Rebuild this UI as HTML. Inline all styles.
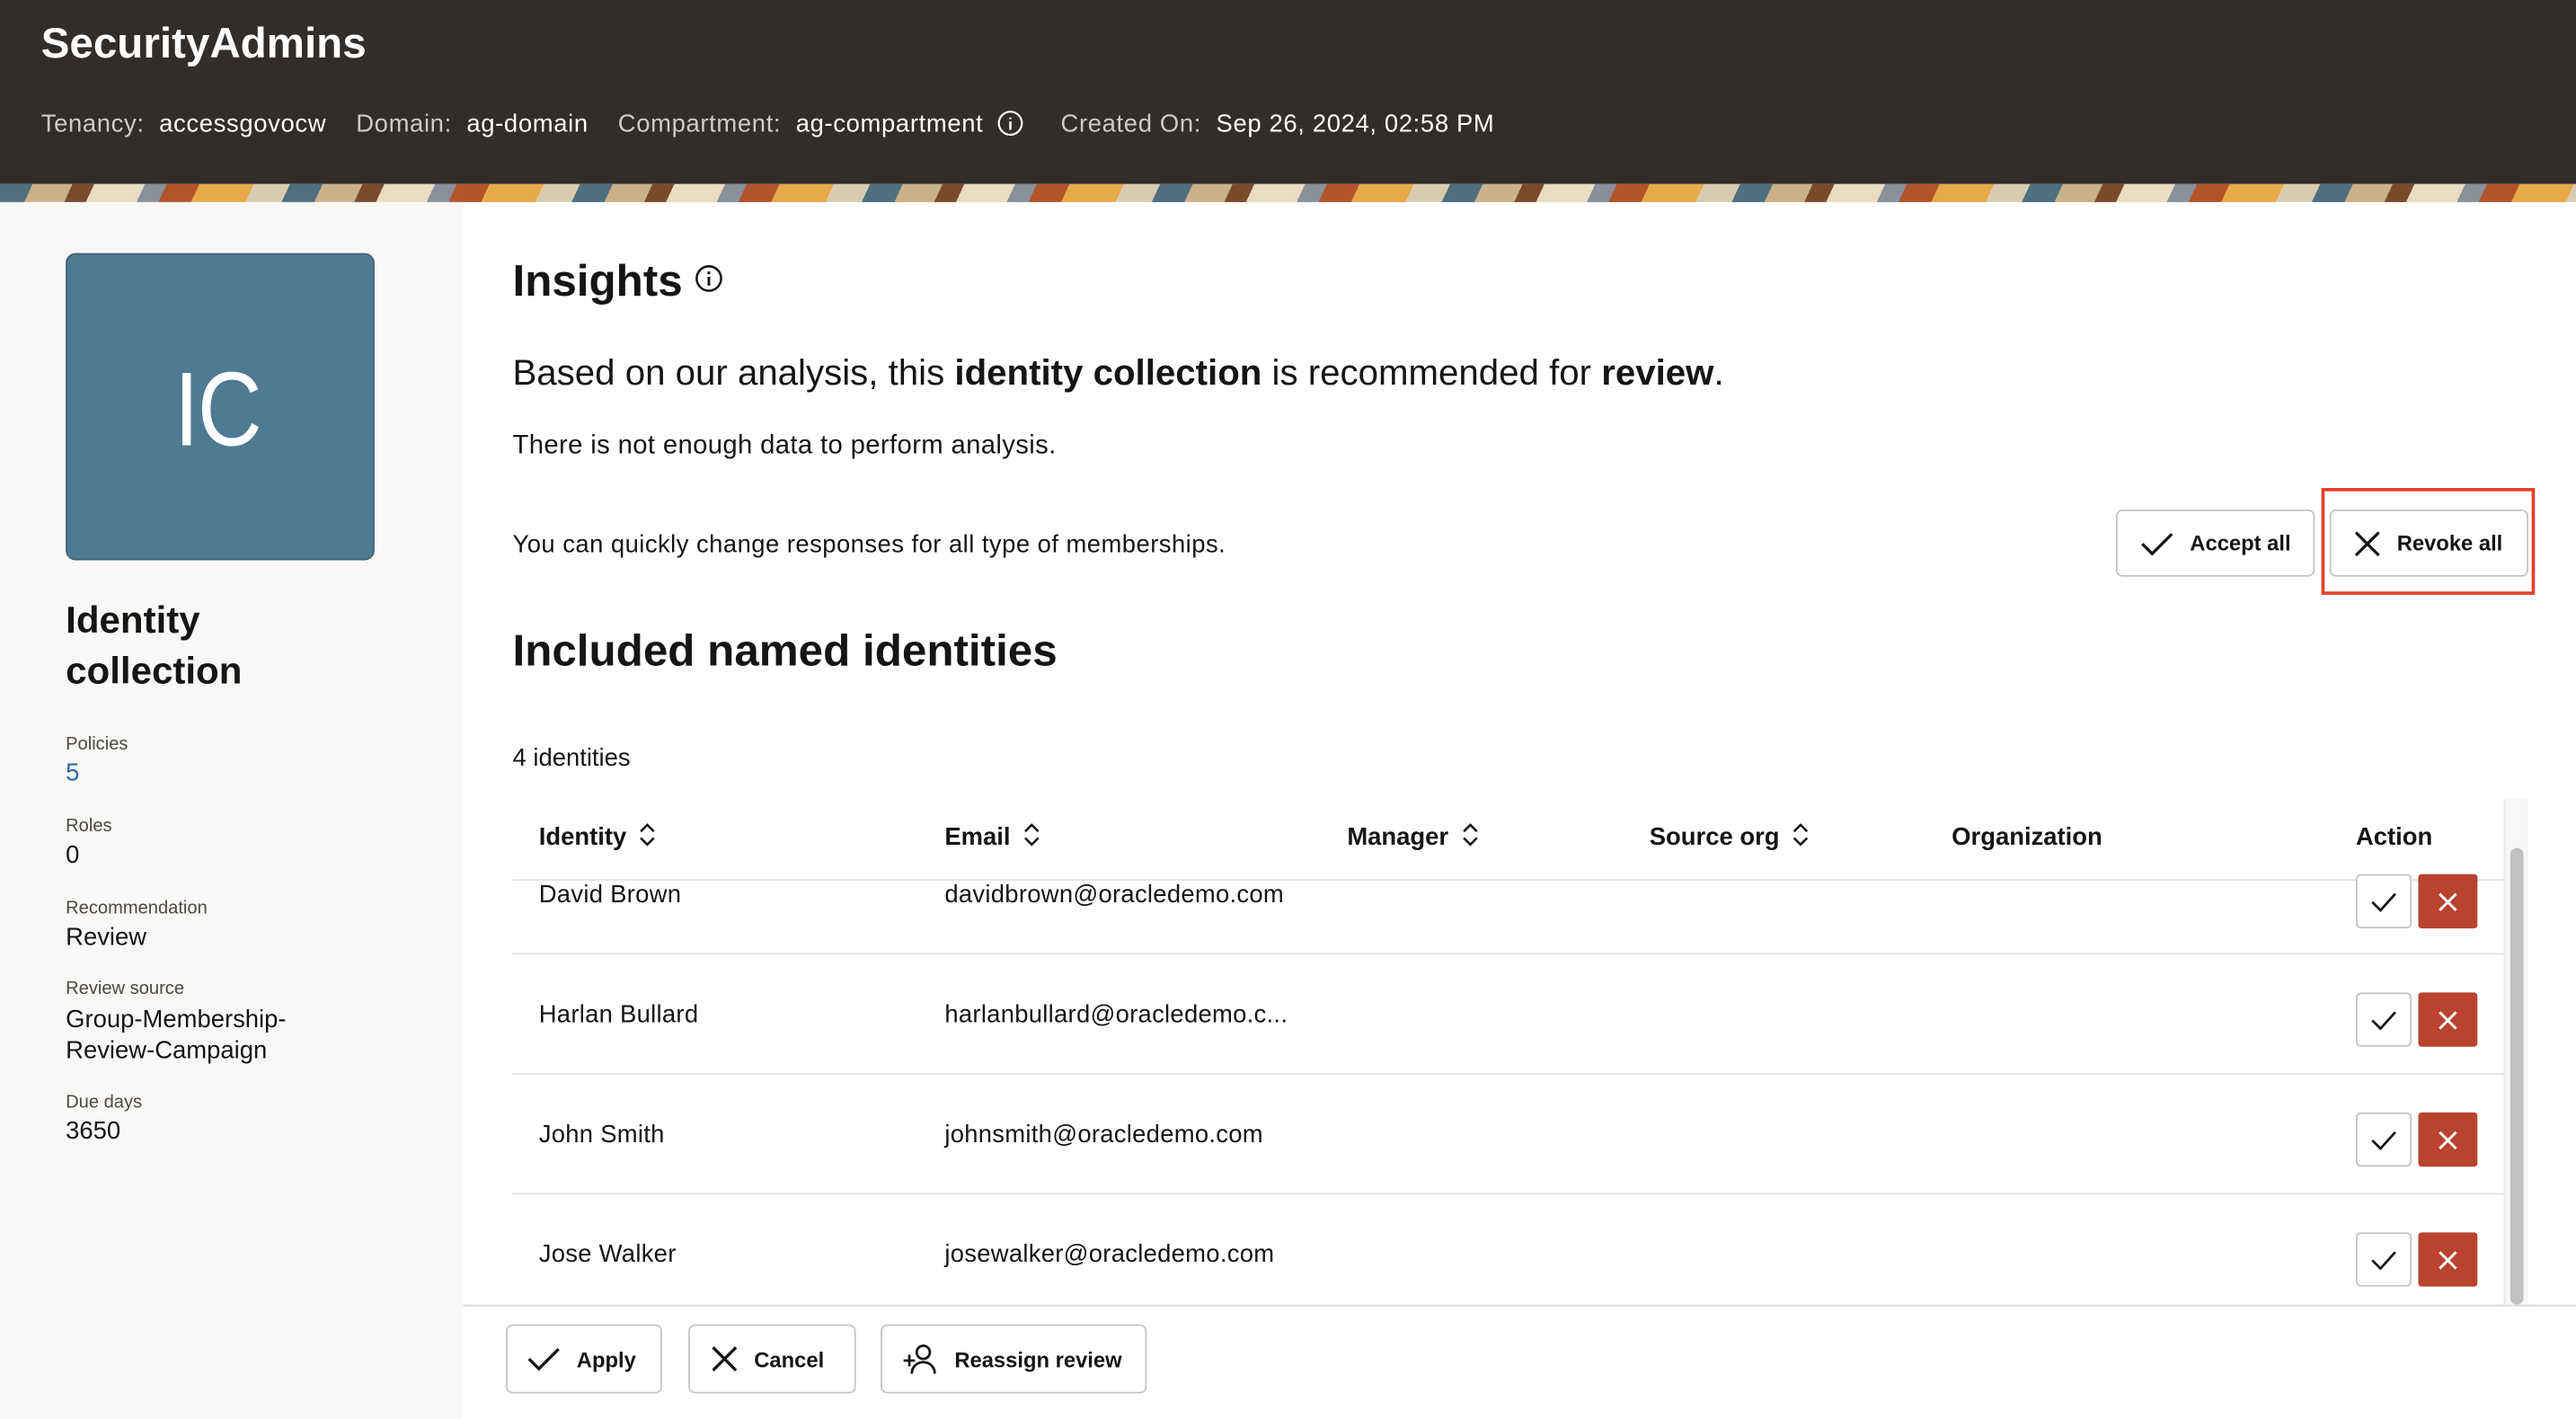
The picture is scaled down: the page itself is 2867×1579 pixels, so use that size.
<!DOCTYPE html>
<html><head><meta charset="utf-8"><style>
*{margin:0;padding:0;box-sizing:border-box}
html,body{width:2867px;height:1579px;overflow:hidden;background:#fff}
#w{width:1568px;height:864px;transform:scale(1.82844);transform-origin:0 0;position:relative;font-family:"Liberation Sans",sans-serif;color:#161513}
.a{position:absolute;white-space:nowrap}
.hdr{left:0;top:0;width:1568px;height:112px;background:#312d2a}
.band{left:0;top:112px;width:1568px;height:11px;background:repeating-linear-gradient(115deg,#4d6f7e 0 18px,#c9b28a 18px 40px,#7a4a2c 40px 52px,#e9dcc0 52px 80px,#8a8f9c 80px 92px,#b2542a 92px 110px,#e7a94a 110px 140px,#d9cbb0 140px 160px)}
.lp{left:0;top:123px;width:282px;height:741px;background:#f9f8f6}
.lbl{font-size:11px;color:#4b4845}
.val{font-size:15px}
.btn{position:absolute;border:1px solid #c6c4c1;border-radius:4px;background:#fff;font-size:13px;font-weight:bold;display:flex;align-items:center}
.btn svg{margin-right:10px}
.th{font-size:15px;font-weight:bold;top:501px}
.th svg{vertical-align:-1px;margin-left:8px}
.td{font-size:15px;letter-spacing:0.15px}
.ok{position:absolute;width:34px;height:33px;border:1px solid #c6c4c1;border-radius:3px;background:#fff;display:flex;align-items:center;justify-content:center}
.no{position:absolute;width:36px;height:33px;background:#b8432f;border-radius:2px;display:flex;align-items:center;justify-content:center}
.hr{position:absolute;left:312px;width:1212px;height:1px;background:#e4e2df}
</style></head><body><div id="w">
<div class="a hdr"></div>
<div class="a" style="left:25px;top:11px;font-size:26px;font-weight:bold;color:#fff">SecurityAdmins</div>
<div class="a" style="left:25px;top:67px;font-size:15px;color:#fff;letter-spacing:0.35px"><span style="color:#cfcbc6">Tenancy:</span>&nbsp; accessgovocw &nbsp;&nbsp; <span style="color:#cfcbc6">Domain:</span>&nbsp; ag-domain &nbsp;&nbsp; <span style="color:#cfcbc6">Compartment:</span>&nbsp; ag-compartment <svg width="16" height="16" viewBox="0 0 16 16" style="vertical-align:-3px;margin-left:4px"><circle cx="8" cy="8" r="7" fill="none" stroke="#fff" stroke-width="1.2"/><path d="M8 7v5M8 4.5v1" stroke="#fff" stroke-width="1.4"/></svg> &nbsp;&nbsp;&nbsp; <span style="color:#cfcbc6">Created On:</span>&nbsp; Sep 26, 2024, 02:58 PM</div>
<div class="a band"></div>
<div class="a lp"></div>
<div class="a" style="left:40px;top:154px;width:188px;height:187px;background:#4e7a93;border-radius:6px;border:1px solid #3d6377"></div>
<div class="a" style="left:106px;top:212px;font-size:64px;font-weight:100;color:#fff;letter-spacing:-1px;transform:scaleX(0.85);transform-origin:0 0">IC</div>
<div class="a" style="left:40px;top:362px;font-size:23px;font-weight:bold;line-height:31px">Identity<br>collection</div>
<div class="a lbl" style="left:40px;top:447px">Policies</div><div class="a val" style="left:40px;top:462px;color:#2c6aa6">5</div>
<div class="a lbl" style="left:40px;top:497px">Roles</div><div class="a val" style="left:40px;top:512px">0</div>
<div class="a lbl" style="left:40px;top:547px">Recommendation</div><div class="a val" style="left:40px;top:562px">Review</div>
<div class="a lbl" style="left:40px;top:596px">Review source</div><div class="a val" style="left:40px;top:611px;line-height:19px">Group-Membership-<br>Review-Campaign</div>
<div class="a lbl" style="left:40px;top:665px">Due days</div><div class="a val" style="left:40px;top:680px">3650</div>

<div class="a" style="left:312px;top:156px;font-size:27px;font-weight:bold">Insights <svg width="17" height="17" viewBox="0 0 16 16" style="vertical-align:2px"><circle cx="8" cy="8" r="7" fill="none" stroke="#161513" stroke-width="1.3"/><path d="M8 7v5M8 4v1.5" stroke="#161513" stroke-width="1.5"/></svg></div>
<div class="a" style="left:312px;top:214px;font-size:22px">Based on our analysis, this <b>identity collection</b> is recommended for <b>review</b>.</div>
<div class="a" style="left:312px;top:263px;font-size:16px;letter-spacing:0.2px">There is not enough data to perform analysis.</div>
<div class="a" style="left:312px;top:323px;font-size:15px;letter-spacing:0.25px">You can quickly change responses for all type of memberships.</div>
<div class="btn" style="left:1288px;top:310px;width:121px;height:41px;padding-left:14px"><svg width="20" height="16" viewBox="0 0 20 16"><path d="M1 8l6 6L19 2" fill="none" stroke="#161513" stroke-width="1.8"/></svg>Accept all</div>
<div class="btn" style="left:1418px;top:310px;width:121px;height:41px;padding-left:14px"><svg width="16" height="16" viewBox="0 0 16 16"><path d="M1 1l14 14M15 1L1 15" stroke="#161513" stroke-width="1.8"/></svg>Revoke all</div>
<div class="a" style="left:1413px;top:297px;width:130px;height:65px;border:2.5px solid #e5402a"></div>

<div class="a" style="left:312px;top:381px;font-size:27px;font-weight:bold">Included named identities</div>
<div class="a" style="left:312px;top:453px;font-size:15px">4 identities</div>
<div class="a th" style="left:328px">Identity<svg width="10" height="14" viewBox="0 0 10 14"><path d="M1 5l4-4 4 4M1 9l4 4 4-4" fill="none" stroke="#161513" stroke-width="1.4"/></svg></div>
<div class="a th" style="left:575px">Email<svg width="10" height="14" viewBox="0 0 10 14"><path d="M1 5l4-4 4 4M1 9l4 4 4-4" fill="none" stroke="#161513" stroke-width="1.4"/></svg></div>
<div class="a th" style="left:820px">Manager<svg width="10" height="14" viewBox="0 0 10 14"><path d="M1 5l4-4 4 4M1 9l4 4 4-4" fill="none" stroke="#161513" stroke-width="1.4"/></svg></div>
<div class="a th" style="left:1004px">Source org<svg width="10" height="14" viewBox="0 0 10 14"><path d="M1 5l4-4 4 4M1 9l4 4 4-4" fill="none" stroke="#161513" stroke-width="1.4"/></svg></div>
<div class="a th" style="left:1188px">Organization</div>
<div class="a th" style="left:1434px">Action</div>
<div class="hr" style="top:535px"></div>
<div class="a td" style="left:328px;top:536px">David Brown</div><div class="a td" style="left:575px;top:536px">davidbrown@oracledemo.com</div>
<div class="hr" style="top:580px"></div>
<div class="a td" style="left:328px;top:609px">Harlan Bullard</div><div class="a td" style="left:575px;top:609px">harlanbullard@oracledemo.c...</div>
<div class="hr" style="top:653px"></div>
<div class="a td" style="left:328px;top:682px">John Smith</div><div class="a td" style="left:575px;top:682px">johnsmith@oracledemo.com</div>
<div class="hr" style="top:726px"></div>
<div class="a td" style="left:328px;top:755px">Jose Walker</div><div class="a td" style="left:575px;top:755px">josewalker@oracledemo.com</div>

<div class="ok" style="left:1434px;top:532px"><svg width="16" height="12"><path d="M1 6l5 5L15 1" fill="none" stroke="#161513" stroke-width="1.5"/></svg></div><div class="no" style="left:1472px;top:532px"><svg width="12" height="12"><path d="M1 1l10 10M11 1L1 11" stroke="#fff" stroke-width="1.6"/></svg></div>
<div class="ok" style="left:1434px;top:604px"><svg width="16" height="12"><path d="M1 6l5 5L15 1" fill="none" stroke="#161513" stroke-width="1.5"/></svg></div><div class="no" style="left:1472px;top:604px"><svg width="12" height="12"><path d="M1 1l10 10M11 1L1 11" stroke="#fff" stroke-width="1.6"/></svg></div>
<div class="ok" style="left:1434px;top:677px"><svg width="16" height="12"><path d="M1 6l5 5L15 1" fill="none" stroke="#161513" stroke-width="1.5"/></svg></div><div class="no" style="left:1472px;top:677px"><svg width="12" height="12"><path d="M1 1l10 10M11 1L1 11" stroke="#fff" stroke-width="1.6"/></svg></div>
<div class="ok" style="left:1434px;top:750px"><svg width="16" height="12"><path d="M1 6l5 5L15 1" fill="none" stroke="#161513" stroke-width="1.5"/></svg></div><div class="no" style="left:1472px;top:750px"><svg width="12" height="12"><path d="M1 1l10 10M11 1L1 11" stroke="#fff" stroke-width="1.6"/></svg></div>

<div class="a" style="left:1524px;top:486px;width:15px;height:308px;background:#f7f7f7;border-left:1px solid #e8e8e8"></div>
<div class="a" style="left:1528px;top:516px;width:8px;height:278px;background:#c1c1c1;border-radius:4px"></div>

<div class="a" style="left:282px;top:794px;width:1286px;height:70px;background:#fff;border-top:1px solid #dcdad7"></div>
<div class="btn" style="left:308px;top:806px;width:95px;height:42px;padding-left:12px"><svg width="20" height="16" viewBox="0 0 20 16"><path d="M1 8l6 6L19 2" fill="none" stroke="#161513" stroke-width="1.8"/></svg>Apply</div>
<div class="btn" style="left:419px;top:806px;width:102px;height:42px;padding-left:13px"><svg width="16" height="16" viewBox="0 0 16 16"><path d="M1 1l14 14M15 1L1 15" stroke="#161513" stroke-width="1.8"/></svg>Cancel</div>
<div class="btn" style="left:536px;top:806px;width:162px;height:42px;padding-left:12px"><svg width="22" height="20" viewBox="0 0 22 20"><circle cx="13" cy="6" r="4" fill="none" stroke="#161513" stroke-width="1.5"/><path d="M6 19c0-4 3-7 7-7s7 3 7 7M1 11h7M4.5 7.5v7" fill="none" stroke="#161513" stroke-width="1.5"/></svg>Reassign review</div>
</div></body></html>
